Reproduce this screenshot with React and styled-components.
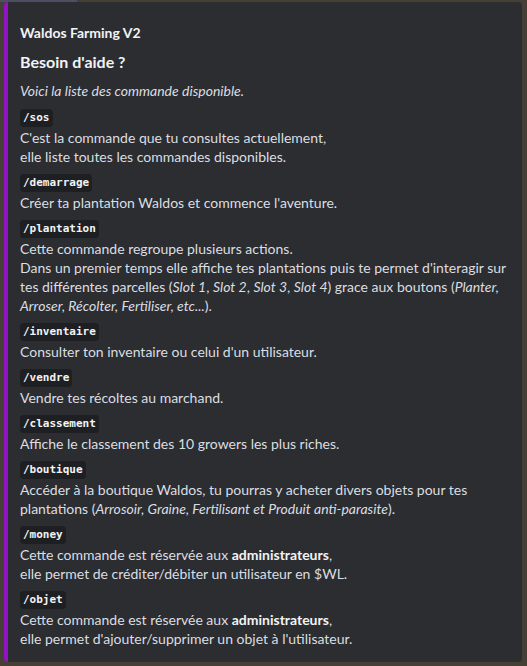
import React from 'react';
import styled, { createGlobalStyle } from 'styled-components';

const GlobalStyle = createGlobalStyle`
  html, body {
    margin: 0;
    padding: 0;
    background: #453f36;
  }
  body {
    font-family: Lato, 'Noto Sans', sans-serif;
    -webkit-font-smoothing: antialiased;
  }
`;

const Page = styled.div`
  width: 527px;
  height: 666px;
  box-sizing: border-box;
  padding: 0 5px 4px 4px;
  display: flex;
  flex-direction: column;
`;

const TopStrip = styled.div`
  height: 4px;
  margin-left: -4px;
  display: flex;
  align-items: flex-start;
`;

const TopMark = styled.div`
  width: 77px;
  height: 2px;
  background: #4d4f63;
`;

const Embed = styled.div`
  flex: 1;
  box-sizing: border-box;
  background: #2b2d31;
  border-left: 4px solid #9212c6;
  border-radius: 4px;
  padding: 21px 16px 14px 12px;
  display: flex;
  flex-direction: column;
  color: #dbdee1;
  font-size: 14px;
`;

const Author = styled.div`
  font-size: 14px;
  font-weight: 700;
  line-height: 20px;
  color: #f2f3f5;
`;

const Title = styled.div`
  margin-top: 8px;
  font-size: 16px;
  font-weight: 700;
  line-height: 22px;
  color: #f2f3f5;
`;

const Description = styled.div`
  margin-top: 8px;
  line-height: 20px;
  font-style: italic;
`;

const Field = styled.div`
  margin-top: 7px;
  display: flex;
  flex-direction: column;
`;

const FieldName = styled.div`
  height: 20px;
  display: flex;
  align-items: center;
`;

const Code = styled.code`
  font-family: 'DejaVu Sans Mono', 'Liberation Mono', monospace;
  font-size: 11px;
  font-weight: 700;
  line-height: 18px;
  color: #f2f3f5;
  background: #1e1f22;
  border-radius: 4px;
  padding: 0 3px;
`;

const FieldValue = styled.div`
  line-height: 19px;
  white-space: nowrap;
`;

const Bold = styled.b`
  font-weight: 700;
  color: #f2f3f5;
`;

const fields = [
  {
    name: '/sos',
    value: (
      <>
        C'est la commande que tu consultes actuellement,
        <br />
        elle liste toutes les commandes disponibles.
      </>
    ),
  },
  {
    name: '/demarrage',
    value: <>Créer ta plantation Waldos et commence l'aventure.</>,
  },
  {
    name: '/plantation',
    value: (
      <>
        Cette commande regroupe plusieurs actions.
        <br />
        Dans un premier temps elle affiche tes plantations puis te permet d'interagir sur
        <br />
        tes différentes parcelles (<i>Slot 1</i>, <i>Slot 2</i>, <i>Slot 3</i>, <i>Slot 4</i>) grace aux boutons (<i>Planter,</i>
        <br />
        <i>Arroser, Récolter, Fertiliser, etc...</i>).
      </>
    ),
  },
  {
    name: '/inventaire',
    value: <>Consulter ton inventaire ou celui d'un utilisateur.</>,
  },
  {
    name: '/vendre',
    value: <>Vendre tes récoltes au marchand.</>,
  },
  {
    name: '/classement',
    value: <>Affiche le classement des 10 growers les plus riches.</>,
  },
  {
    name: '/boutique',
    value: (
      <>
        Accéder à la boutique Waldos, tu pourras y acheter divers objets pour tes
        <br />
        plantations (<i>Arrosoir, Graine, Fertilisant et Produit anti-parasite</i>).
      </>
    ),
  },
  {
    name: '/money',
    value: (
      <>
        Cette commande est réservée aux <Bold>administrateurs</Bold>,
        <br />
        elle permet de créditer/débiter un utilisateur en $WL.
      </>
    ),
  },
  {
    name: '/objet',
    value: (
      <>
        Cette commande est réservée aux <Bold>administrateurs</Bold>,
        <br />
        elle permet d'ajouter/supprimer un objet à l'utilisateur.
      </>
    ),
  },
];

export default function App() {
  return (
    <>
      <GlobalStyle />
      <Page>
        <TopStrip>
          <TopMark />
        </TopStrip>
        <Embed>
          <Author>Waldos Farming V2</Author>
          <Title>Besoin d'aide ?</Title>
          <Description>Voici la liste des commande disponible.</Description>
          {fields.map((f) => (
            <Field key={f.name}>
              <FieldName>
                <Code>{f.name}</Code>
              </FieldName>
              <FieldValue>{f.value}</FieldValue>
            </Field>
          ))}
        </Embed>
      </Page>
    </>
  );
}
